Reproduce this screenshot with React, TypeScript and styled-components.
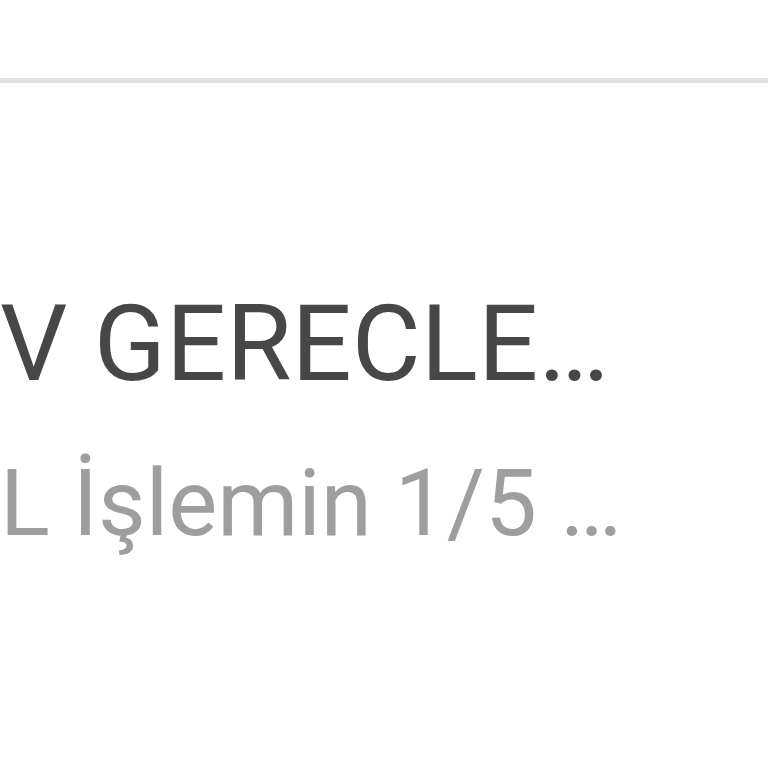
import React from "react";
import styled, { createGlobalStyle } from "styled-components";

const Global = createGlobalStyle`
  html, body { margin: 0; padding: 0; background: #ffffff; }
  body { font-family: Roboto, "Noto Sans", sans-serif; }
`;

const Page = styled.div`
  width: 768px;
  height: 768px;
  overflow: hidden;
  background: #ffffff;
  display: flex;
  flex-direction: column;
`;

const Divider = styled.div`
  margin-top: 78px;
  height: 5px;
  background: #e2e2e2;
  flex-shrink: 0;
`;

const Item = styled.div`
  display: flex;
  flex-direction: column;
  padding-top: 201px;
  padding-left: 0;
  gap: 40px;
`;

const Line = styled.div<{ $size: number; $color: string }>`
  font-family: Roboto, sans-serif;
  font-size: ${(p) => p.$size}px;
  line-height: 120px;
  color: ${(p) => p.$color};
  white-space: nowrap;
`;

export default function App() {
  return (
    <Page>
      <Global />
      <Divider />
      <Item>
        <Line $size={106} $color="#474747">V GERECLE…</Line>
        <Line $size={92.5} $color="#9e9e9e">L İşlemin 1/5 …</Line>
      </Item>
    </Page>
  );
}
